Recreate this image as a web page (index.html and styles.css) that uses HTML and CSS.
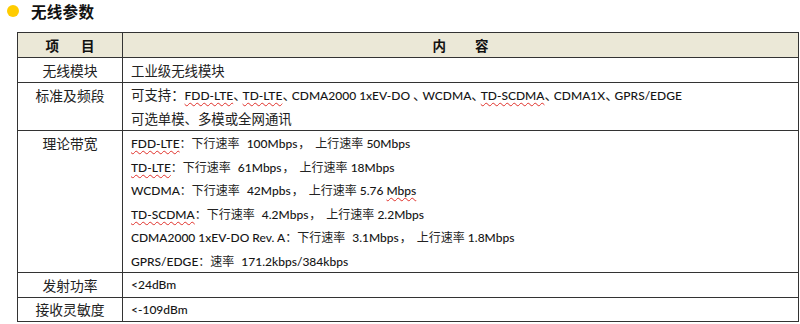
FILE: index.html
```html
<!DOCTYPE html>
<html lang="zh-CN">
<head>
<meta charset="utf-8">
<title>无线参数</title>
<link rel="stylesheet" href="styles.css">
</head>
<body>
<div class="title">
  <span class="dot"></span>
  <h2>无线参数</h2>
</div>
<table class="spec">
  <colgroup><col class="c1"><col class="c2"></colgroup>
  <thead>
    <tr class="r-head"><th><div class="hd">项<span class="gap1"></span>目</div></th><th><div class="hd">内<span class="gap2"></span>容</div></th></tr>
  </thead>
  <tbody>
    <tr class="r1"><td class="k">无线模块</td><td class="v"><div class="ln"><span class="cb">工业级无线模块</span></div></td></tr>
    <tr class="r2"><td class="k">标准及频段</td><td class="v">
      <div class="ln"><span class="cb">可支持：</span><u class="sp">FDD-LTE</u><span class="cb dn">、</span><u class="sp">TD-LTE</u><span class="cb dn">、</span>CDMA2000 1xEV-DO <span class="cb dn">、</span>WCDMA<span class="cb dn">、</span><u class="sp">TD-SCDMA</u><span class="cb dn">、</span>CDMA1X<span class="cb dn">、</span>GPRS/EDGE</div>
      <div class="ln"><span class="cb">可选单模、多模或全网通讯</span></div>
    </td></tr>
    <tr class="r3"><td class="k">理论带宽</td><td class="v">
      <div class="ln"><u class="sp">FDD-LTE</u><span class="cn">：下行速率</span> 100Mbps<span class="cn cm"><span class="cma">，</span>上行速率</span> 50Mbps</div>
      <div class="ln"><u class="sp">TD-LTE</u><span class="cn">：下行速率</span> 61Mbps<span class="cn cm"><span class="cma">，</span>上行速率</span> 18Mbps</div>
      <div class="ln">WCDMA<span class="cn">：下行速率</span> 42Mpbs<span class="cn cm"><span class="cma">，</span>上行速率</span> 5.76 <u class="sp">Mbps</u></div>
      <div class="ln"><u class="sp">TD-SCDMA</u><span class="cn">：下行速率</span> 4.2Mbps<span class="cn cm"><span class="cma">，</span>上行速率</span> 2.2Mbps</div>
      <div class="ln">CDMA2000 1xEV-DO Rev. A<span class="cn">：下行速率</span> 3.1Mbps<span class="cn cm"><span class="cma">，</span>上行速率</span> 1.8Mbps</div>
      <div class="ln">GPRS/EDGE<span class="cn">：速率</span> 171.2kbps/384kbps</div>
    </td></tr>
    <tr class="r4"><td class="k">发射功率</td><td class="v"><div class="ln">&lt;24dBm</div></td></tr>
    <tr class="r5"><td class="k">接收灵敏度</td><td class="v"><div class="ln">&lt;-109dBm</div></td></tr>
  </tbody>
</table>
</body>
</html>
```
FILE: styles.css
```css
html, body {
  margin: 0;
  padding: 0;
  background: #ffffff;
}
body {
  font-family: Lato, "Noto Sans CJK SC", sans-serif;
  color: #151515;
  width: 800px;
  height: 324px;
  overflow: hidden;
}
.title {
  display: flex;
  align-items: center;
  height: 22px;
  padding-left: 7px;
  margin-bottom: 10px;
}
.dot {
  width: 12px;
  height: 12px;
  border-radius: 50%;
  background: #ffcc00;
  margin-right: 12px;
}
.title h2 {
  margin: 0;
  font-family: "Noto Sans CJK SC", sans-serif;
  font-size: 15.5px;
  font-weight: 700;
  color: #111;
  line-height: 20px;
  letter-spacing: 0.3px;
}
.spec {
  border-collapse: collapse;
  margin-left: 17px;
  width: 782px;
  table-layout: fixed;
}
.c1 { width: 105px; }
.spec th, .spec td {
  border: 1px solid #333;
  padding: 0;
  vertical-align: top;
}
.r-head th {
  background: #ebe8d7;
  color: #111;
}
.hd {
  height: 24px;
  line-height: 24px;
  font-family: "Noto Sans CJK SC", sans-serif;
  font-size: 13.5px;
  font-weight: 700;
  text-align: center;
  overflow: hidden;
}
.gap1 { display: inline-block; width: 22px; height: 1px; }
.gap2 { display: inline-block; width: 29px; height: 1px; }
.k {
  font-family: "Noto Sans CJK SC", sans-serif;
  font-size: 13.8px;
  text-align: center;
  line-height: 24px;
  color: #222;
}
.spec td.v {
  font-size: 12px;
  font-weight: 500;
  padding-left: 8px;
  color: #151515;
  white-space: nowrap;
}
.ln {
  height: 24px;
  line-height: 24px;
}
.r2 .ln, .r3 .ln { height: 23.5px; line-height: 23.5px; }
.r5 .k { line-height: 23px; }
.r5 .ln { height: 23px; line-height: 23px; }
.cb {
  font-family: "Noto Sans CJK SC", sans-serif;
  font-size: 13.4px;
  font-weight: 400;
  color: #222;
}
.dn { letter-spacing: -4px; }
.cn {
  font-family: "Noto Sans CJK SC", sans-serif;
  font-size: 12px;
  font-weight: 400;
  color: #222;
  padding-right: 4px;
}
.cn.cm { padding-left: 1px; padding-right: 0; }
.cma { margin-right: 5px; }
.sp {
  text-decoration: underline wavy #e0302a;
  text-decoration-thickness: 1px;
  text-underline-offset: 2px;
}
```
